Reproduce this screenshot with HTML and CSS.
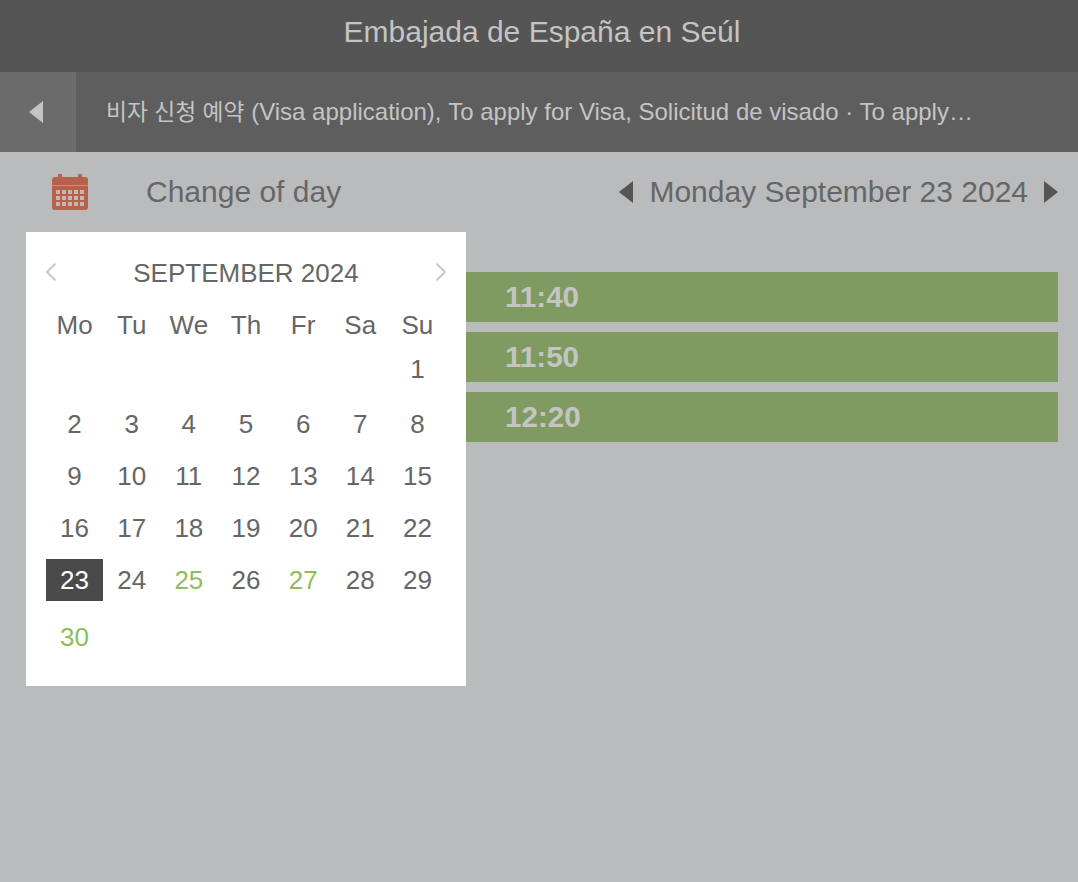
FILE: index.html
```html
<!DOCTYPE html>
<html lang="en">
<head>
  <meta charset="UTF-8">
  <meta name="viewport" content="width=device-width, initial-scale=1.0">
  <title>Embajada de España en Seúl</title>
  <link rel="stylesheet" href="styles.css">
</head>
<body>

  <!-- Title bar -->
  <header class="title-bar">Embajada de España en Seúl</header>

  <!-- Service name and back button -->
  <nav class="service-bar">
    <a class="back-btn" href="#" aria-label="Back"><span class="arrow-left arrow-light"></span></a>
    <div class="service-name"><span class="service-ko">비자 신청 예약</span> (Visa application), To apply for Visa, Solicitud de visado · To apply…</div>
  </nav>

  <!-- Day selector -->
  <div class="day-bar">
    <div class="change-day">
      <svg class="cal-icon" width="36" height="36" viewBox="0 0 36 36">
        <path fill="#b9604a" d="M6 3V1a1 1 0 0 1 1-1h2a1 1 0 0 1 1 1v2h16V1a1 1 0 0 1 1-1h2a1 1 0 0 1 1 1v2h3a3 3 0 0 1 3 3v27a3 3 0 0 1-3 3H3a3 3 0 0 1-3-3V6a3 3 0 0 1 3-3z"/>
        <rect y="11" width="36" height="1" fill="#c98a78"/>
        <g fill="#c4b6b0">
          <rect x="4" y="16" width="4" height="4"/><rect x="10" y="16" width="4" height="4"/><rect x="16" y="16" width="4" height="4"/><rect x="22" y="16" width="4" height="4"/><rect x="28" y="16" width="4" height="4"/>
          <rect x="4" y="22" width="4" height="4"/><rect x="10" y="22" width="4" height="4"/><rect x="16" y="22" width="4" height="4"/><rect x="22" y="22" width="4" height="4"/><rect x="28" y="22" width="4" height="4"/>
          <rect x="4" y="28" width="4" height="4"/><rect x="10" y="28" width="4" height="4"/><rect x="16" y="28" width="4" height="4"/><rect x="22" y="28" width="4" height="4"/><rect x="28" y="28" width="4" height="4"/>
        </g>
      </svg>
      <span class="change-label">Change of day</span>
    </div>
    <div class="current-day">
      <span class="arrow-left arrow-dark"></span>
      <span class="current-label">Monday September 23 2024</span>
      <span class="arrow-right arrow-dark"></span>
    </div>
  </div>

  <!-- Free time slots -->
  <div class="slots">
    <div class="slot">11:40</div>
    <div class="slot">11:50</div>
    <div class="slot">12:20</div>
  </div>

  <!-- Date picker popup -->
  <div class="picker">
    <div class="picker-head">
      <svg class="chev" width="12" height="20" viewBox="0 0 12 20"><path d="M9.500 .5L1 9l8.500 8.500" fill="none" stroke="#c8c8c8" stroke-width="2"/></svg>
      <span class="picker-month">SEPTEMBER 2024</span>
      <svg class="chev" width="12" height="20" viewBox="0 0 12 20"><path d="M2.500 .5L11 9l-8.500 8.500" fill="none" stroke="#c8c8c8" stroke-width="2"/></svg>
    </div>
    <table class="cal">
      <thead>
        <tr><th>Mo</th><th>Tu</th><th>We</th><th>Th</th><th>Fr</th><th>Sa</th><th>Su</th></tr>
      </thead>
      <tbody>
        <tr class="row-first"><td></td><td></td><td></td><td></td><td></td><td></td><td>1</td></tr>
        <tr><td>2</td><td>3</td><td>4</td><td>5</td><td>6</td><td>7</td><td>8</td></tr>
        <tr><td>9</td><td>10</td><td>11</td><td>12</td><td>13</td><td>14</td><td>15</td></tr>
        <tr><td>16</td><td>17</td><td>18</td><td>19</td><td>20</td><td>21</td><td>22</td></tr>
        <tr><td class="selected">23</td><td>24</td><td class="free">25</td><td>26</td><td class="free">27</td><td>28</td><td>29</td></tr>
        <tr class="row-last"><td class="free">30</td><td></td><td></td><td></td><td></td><td></td><td></td></tr>
      </tbody>
    </table>
  </div>

</body>
</html>
```

FILE: styles.css
```css
* {
  margin: 0;
  padding: 0;
  box-sizing: border-box;
}

html, body {
  height: 100%;
}

body {
  font-family: 'Liberation Sans', 'Noto Sans CJK KR', sans-serif;
  background-color: #babbbd;
  color: #666;
  position: relative;
  overflow: hidden;
}

/* Title bar */
.title-bar {
  height: 72px;
  padding-left: 6px;
  line-height: 64px;
  text-align: center;
  font-size: 30px;
  background-color: #555;
  color: #c4c4c4;
}

/* Service bar */
.service-bar {
  height: 80px;
  display: flex;
  align-items: center;
  background-color: #5e5e5e;
  color: #c4c4c4;
}

.back-btn {
  width: 76px;
  height: 100%;
  flex-shrink: 0;
  display: flex;
  align-items: center;
  padding-left: 29px;
  background-color: #6b6b6b;
}

.service-name {
  margin-left: 30px;
  font-size: 24px;
  line-height: 28px;
  white-space: nowrap;
}

.service-ko {
  font-size: 22.8px;
}

/* Triangles */
.arrow-left, .arrow-right {
  display: block;
  width: 0;
  height: 0;
  border-top: 11px solid transparent;
  border-bottom: 11px solid transparent;
}

.arrow-left {
  border-right: 14px solid;
}

.arrow-right {
  border-left: 14px solid;
}

.arrow-light {
  color: #c4c4c4;
}

.arrow-dark {
  color: #555;
}

/* Day selector */
.day-bar {
  height: 80px;
  display: flex;
  align-items: center;
  justify-content: space-between;
  padding: 0 20px 0 52px;
}

.change-day {
  display: flex;
  align-items: center;
}

.cal-icon {
  display: block;
}

.change-label {
  margin-left: 58px;
  font-size: 30px;
}

.current-day {
  display: flex;
  align-items: center;
}

.current-label {
  margin: 0 16px;
  font-size: 30px;
}

/* Time slots */
.slots {
  padding: 40px 20px 0 40px;
}

.slot {
  height: 50px;
  line-height: 50px;
  margin-bottom: 10px;
  padding-left: 465px;
  background-color: #7f9b62;
  color: #c4c5c3;
  font-size: 29.6px;
  font-weight: bold;
}

/* Date picker */
.picker {
  position: absolute;
  top: 232px;
  left: 26px;
  width: 440px;
  height: 454px;
  padding: 20px;
  background-color: #fff;
}

.picker-head {
  height: 42px;
  margin-bottom: 11px;
  display: flex;
  align-items: center;
  justify-content: space-between;
}

.picker-month {
  font-size: 26px;
}

.chev {
  display: block;
}

.cal {
  width: 400px;
  border-collapse: collapse;
  table-layout: fixed;
  font-size: 26px;
  text-align: center;
}

.cal th {
  height: 40px;
  font-weight: normal;
}

.cal td {
  height: 52px;
  background-clip: content-box;
  padding: 5px 0;
}

.cal .row-first td {
  height: 53px;
  padding: 2px 0 6px;
}

.cal .row-last td {
  height: 57px;
  padding: 10px 0 5px;
}

.cal .selected {
  background-color: #4a4a4a;
  color: #fff;
}

.cal .free {
  color: #8cbe5a;
}
```
